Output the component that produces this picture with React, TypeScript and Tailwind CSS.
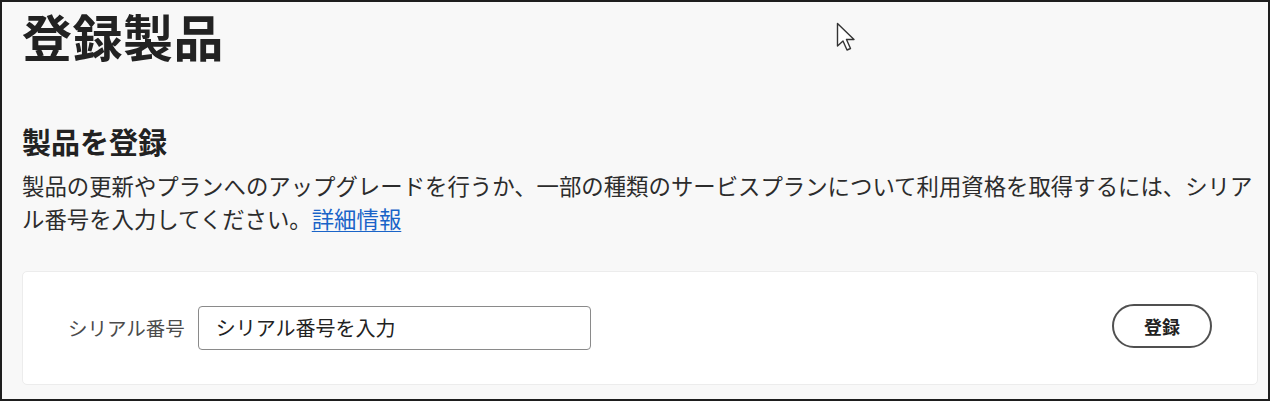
import React from "react";

export default function App() {
  return (
    <div
      className="relative w-[1270px] h-[401px] border-2 border-[#1e1e1e] bg-[#f8f8f8] text-[#222]"
      style={{ fontFamily: '"Noto Sans CJK JP", "Noto Sans", sans-serif' }}
    >
      <div className="pl-[20px] pr-[10px] pt-[1px]">
        <h1 className="text-[50px] font-bold leading-[64px] tracking-[0.5px]">登録製品</h1>
        <h2 className="mt-[55px] text-[29px] font-bold leading-[38px]">製品を登録</h2>
        <p className="mt-[9px] max-w-[1236px] text-[22.4px] leading-[33px] text-[#2c2c2c]">
          製品の更新やプランへのアップグレードを行うか、一部の種類のサービスプランについて利用資格を取得するには、シリアル番号を入力してください。
          <a href="#" className="text-[#1a64c8] underline underline-offset-[3px] decoration-1">詳細情報</a>
        </p>
        <div className="mt-[36px] h-[114px] w-[1236px] rounded-[5px] border border-[#ececec] bg-white flex items-center pl-[45px] pr-[45px]">
          <span className="text-[19.5px] text-[#4b4b4b] mr-[13px]">シリアル番号</span>
          <div className="w-[393px] h-[44px] rounded-[4px] border-[1.5px] border-[#8a8a8a] flex items-center pl-[17px] text-[20px] text-[#222]">
            シリアル番号を入力
          </div>
          <div className="flex-1" />
          <button className="w-[100px] h-[44px] rounded-full border-2 border-[#505050] text-[18px] font-bold text-[#222] -mt-[4px]">
            登録
          </button>
        </div>
      </div>
      <svg className="absolute left-[834px] top-[20px]" width="22" height="32" viewBox="0 0 22 32">
        <path d="M1.5 1.5 L1.5 24 L7 19 L11 28 L14.5 26.5 L10.5 17.5 L18 17.5 Z" fill="white" stroke="#333" strokeWidth="1.4" strokeLinejoin="round" />
      </svg>
    </div>
  );
}
